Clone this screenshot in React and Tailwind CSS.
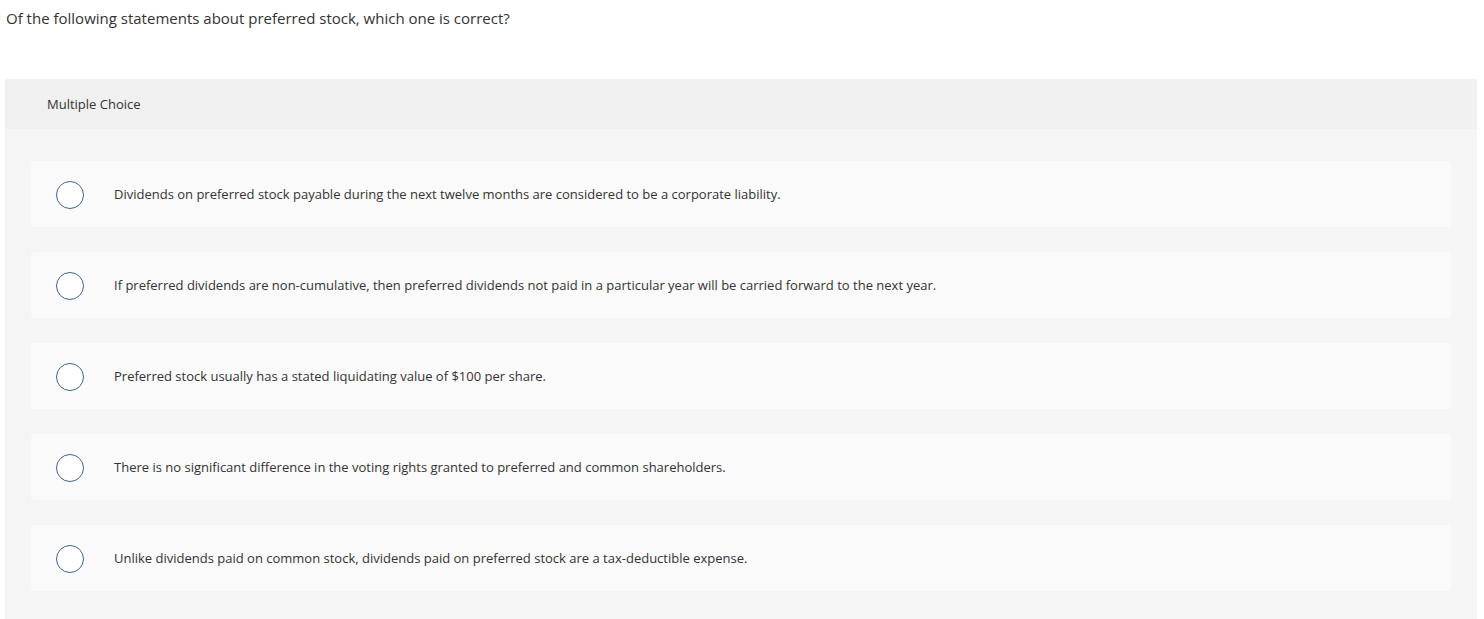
const options = [
  'Dividends on preferred stock payable during the next twelve months are considered to be a corporate liability.',
  'If preferred dividends are non-cumulative, then preferred dividends not paid in a particular year will be carried forward to the next year.',
  'Preferred stock usually has a stated liquidating value of $100 per share.',
  'There is no significant difference in the voting rights granted to preferred and common shareholders.',
  'Unlike dividends paid on common stock, dividends paid on preferred stock are a tax-deductible expense.',
]

export default function App() {
  return (
    <div className="bg-white min-h-screen text-[#333] font-['Open_Sans',Arial,sans-serif]">
      <p className="pl-[6px] pt-[8px] text-[15px] leading-[20px]">
        Of the following statements about preferred stock, which one is correct?
      </p>

      <div className="ml-[5px] mr-[7px] mt-[51px] rounded-t-[3px] bg-[#f5f5f5]">
        <div className="h-[50px] flex items-center pl-[42px] pt-[1px] bg-[#f0f0f0] rounded-t-[3px] text-[13px]">
          Multiple Choice
        </div>
        <div className="px-[26px] pt-[32px] pb-[28px] flex flex-col gap-[25px]">
          {options.map((text) => (
            <label
              key={text}
              className="h-[66px] bg-[#fafafa] rounded-[3px] flex items-center cursor-pointer"
            >
              <span className="ml-[25px] mt-[1px] w-[28px] h-[28px] rounded-full border-[1.5px] border-[#3d6591] bg-white shrink-0" />
              <span className="ml-[30px] mt-[2px] text-[13px]">{text}</span>
            </label>
          ))}
        </div>
      </div>
    </div>
  )
}
